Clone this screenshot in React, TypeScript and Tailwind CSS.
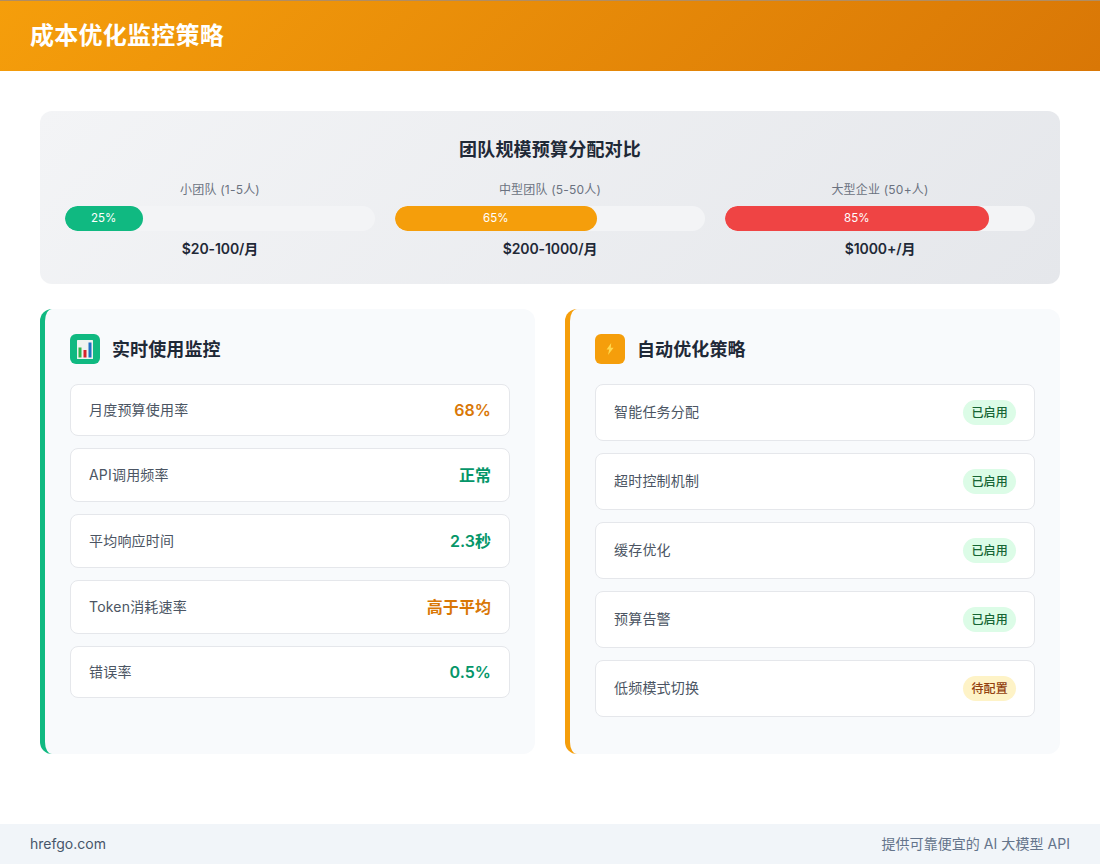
const stack = "font-['Inter','Noto_Sans_CJK_SC',sans-serif]";

function Budget({ label, pct, color, price, width }: { label: string; pct: string; color: string; price: string; width: string }) {
  return (
    <div className="flex flex-col items-center">
      <div className="text-xs tracking-[0.2px] text-[#6b7280] mb-2">{label}</div>
      <div className="w-full h-[25px] bg-[#f3f4f6] rounded-[12.5px] overflow-hidden mb-2">
        <div className={`h-full rounded-[12.5px] flex items-center justify-center text-[11.5px] font-normal text-white ${color} ${width}`}>{pct}</div>
      </div>
      <div className="text-sm tracking-[-0.1px] font-semibold text-[#1f2937]">{price}</div>
    </div>
  );
}

function Metric({ label, value, color, height }: { label: string; value: string; color: string; height: string }) {
  return (
    <div className={`flex items-center justify-between px-[18px] bg-white border border-[#e5e7eb] rounded-lg ${height}`}>
      <span className="text-sm leading-5 tracking-[0.2px] font-normal text-[#4b5563]">{label}</span>
      <span className={`text-base leading-6 tracking-[0.05px] font-semibold ${color}`}>{value}</span>
    </div>
  );
}

function Strategy({ label, status, warn }: { label: string; status: string; warn?: boolean }) {
  return (
    <div className="flex items-center justify-between h-[57px] px-[18px] bg-white border border-[#e5e7eb] rounded-lg">
      <span className="text-sm leading-5 mb-0.5 tracking-[0.2px] font-normal text-[#4b5563]">{label}</span>
      <span className={`h-[25px] flex items-center text-xs tracking-[0.2px] font-medium px-2 rounded-full ${warn ? 'bg-[#fef3c7] text-[#92400e]' : 'bg-[#dcfce7] text-[#166534]'}`}>{status}</span>
    </div>
  );
}

export default function App() {
  return (
    <div className={`w-[1100px] h-[864px] flex flex-col bg-white ${stack}`}>
      <header className="h-[71px] shrink-0 flex items-center px-[30px] bg-[linear-gradient(135deg,#f59e0b,#d97706)] border-t border-[#b08d63]">
        <h1 className="text-2xl tracking-[0.25px] font-bold text-white">成本优化监控策略</h1>
      </header>
      <main className="flex-1 px-10 pt-10">
        <section className="h-[173px] p-[25px] rounded-xl bg-[linear-gradient(135deg,#f3f4f6,#e5e7eb)]">
          <h2 className="text-lg tracking-[0.2px] font-semibold text-[#1f2937] text-center mb-[18px]">团队规模预算分配对比</h2>
          <div className="grid grid-cols-3 gap-5">
            <Budget label="小团队 (1-5人)" pct="25%" color="bg-[#10b981]" width="w-[25%]" price="$20-100/月" />
            <Budget label="中型团队 (5-50人)" pct="65%" color="bg-[#f59e0b]" width="w-[65%]" price="$200-1000/月" />
            <Budget label="大型企业 (50+人)" pct="85%" color="bg-[#ef4444]" width="w-[85%]" price="$1000+/月" />
          </div>
        </section>
        <div className="grid grid-cols-2 gap-[30px] mt-[25px]">
          <section className="h-[445px] p-[25px] bg-[#f8fafc] rounded-xl border-l-[5px] border-[#10b981]">
            <div className="flex items-center gap-3 mb-5">
              <div className="w-[30px] h-[30px] rounded-md bg-[#10b981] flex items-center justify-center">
                <svg width="16" height="19" viewBox="0 0 16 19">
                  <rect x="0" y="0" width="16" height="19" rx="0.5" fill="#eef3f0" />
                  <rect x="1.5" y="7.5" width="3" height="10" fill="#2eb54a" />
                  <rect x="6.5" y="10" width="3" height="7.5" fill="#d8232a" />
                  <rect x="11.5" y="2.5" width="3" height="15" fill="#1f6fc4" />
                </svg>
              </div>
              <h3 className="text-lg leading-[27px] tracking-[0.1px] font-semibold text-[#1f2937]">实时使用监控</h3>
            </div>
            <div className="flex flex-col gap-3">
              <Metric height="h-[52px]" label="月度预算使用率" value="68%" color="text-[#d97706]" />
              <Metric height="h-[54px]" label="API调用频率" value="正常" color="text-[#059669]" />
              <Metric height="h-[54px]" label="平均响应时间" value="2.3秒" color="text-[#059669]" />
              <Metric height="h-[54px]" label="Token消耗速率" value="高于平均" color="text-[#d97706]" />
              <Metric height="h-[52px]" label="错误率" value="0.5%" color="text-[#059669]" />
            </div>
          </section>
          <section className="h-[445px] p-[25px] bg-[#f8fafc] rounded-xl border-l-[5px] border-[#f59e0b]">
            <div className="flex items-center gap-3 mb-5">
              <div className="w-[30px] h-[30px] rounded-md bg-[#f59e0b] flex items-center justify-center">
                <svg width="8" height="12" viewBox="0 0 8 12"><path d="M5.2 0 .6 6.6h2.6L2 12l5.6-7.2H4.8z" fill="#ffd84d" /></svg>
              </div>
              <h3 className="text-lg leading-[27px] tracking-[0.1px] font-semibold text-[#1f2937]">自动优化策略</h3>
            </div>
            <div className="flex flex-col gap-3">
              <Strategy label="智能任务分配" status="已启用" />
              <Strategy label="超时控制机制" status="已启用" />
              <Strategy label="缓存优化" status="已启用" />
              <Strategy label="预算告警" status="已启用" />
              <Strategy label="低频模式切换" status="待配置" warn />
            </div>
          </section>
        </div>
      </main>
      <footer className="h-10 shrink-0 flex items-center justify-between px-[30px] bg-[#f1f5f9] text-sm text-[#64748b]">
        <span className="font-normal text-[#475569]">hrefgo.com</span>
        <span className="tracking-[0.05px]">提供可靠便宜的 AI 大模型 API</span>
      </footer>
    </div>
  );
}
